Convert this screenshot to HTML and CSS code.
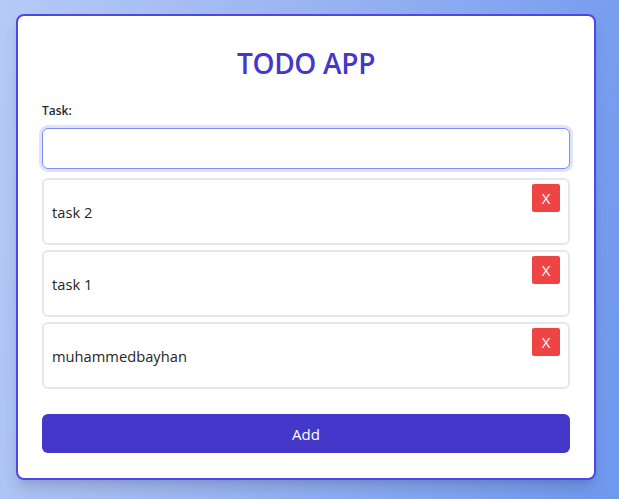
FILE: index.html
```html
<!DOCTYPE html>
<html>
<head>
<meta charset="utf-8">
<link rel="stylesheet" href="styles.css">
</head>
<body>
<div class="card">
  <h1 class="title">TODO APP</h1>
  <label class="label" for="task">Task:</label>
  <input class="input" id="task" type="text">
  <ul class="list">
    <li class="item"><span class="item-text">task 2</span><button class="del">X</button></li>
    <li class="item"><span class="item-text">task 1</span><button class="del">X</button></li>
    <li class="item"><span class="item-text">muhammedbayhan</span><button class="del">X</button></li>
  </ul>
  <button class="add">Add</button>
</div>
</body>
</html>
```
FILE: styles.css
```css
html, body {
  margin: 0;
  padding: 0;
  height: 100%;
}
body {
  background: linear-gradient(100deg, #b5caf6 0%, #9db6f2 40%, #6e97ee 100%);
  font-family: "Open Sans", "Noto Sans", sans-serif;
  padding: 14px 0 0 16px;
  box-sizing: border-box;
}
.card {
  width: 580px;
  height: 466px;
  box-sizing: border-box;
  background: #fff;
  border: 2px solid #4f46e5;
  border-radius: 8px;
  box-shadow: 0 10px 15px -3px rgba(0,0,0,0.15), 0 4px 6px -4px rgba(0,0,0,0.1);
  padding: 24px 24px 24px 24px;
  display: flex;
  flex-direction: column;
}
.title {
  margin: 3px 0 0;
  text-align: center;
  font-size: 28px;
  font-weight: 600;
  color: #4338ca;
  line-height: 40px;
  letter-spacing: -0.3px;
}
.label {
  margin-top: 20px;
  font-size: 12px;
  font-weight: 600;
  color: #1f2937;
  line-height: 16px;
}
.input {
  margin-top: 9px;
  height: 41px;
  box-sizing: border-box;
  border: 1px solid #818cf8;
  border-radius: 6px;
  box-shadow: 0 0 0 3px #dfe3fc;
  outline: none;
  width: 100%;
}
.list {
  list-style: none;
  margin: 9px 0 0;
  padding: 0;
  display: flex;
  flex-direction: column;
  gap: 5px;
}
.item {
  position: relative;
  height: 67px;
  box-sizing: border-box;
  border: 2px solid #e5e7eb;
  border-radius: 6px;
  display: flex;
  align-items: center;
  padding: 0 8px;
}
.item-text {
  font-size: 14.7px;
  color: #262626;
  margin-top: 1px;
}
.del {
  position: absolute;
  top: 4px;
  right: 8px;
  width: 28px;
  height: 28px;
  border: none;
  border-radius: 2px;
  background: #ef4444;
  color: #fff;
  font-family: "Open Sans", sans-serif;
  font-size: 15px;
  padding: 0;
}
.add {
  margin-top: 25px;
  height: 39px;
  border: none;
  border-radius: 6px;
  background: #4338ca;
  color: #fff;
  font-family: "Open Sans", sans-serif;
  font-size: 15px;
  width: 100%;
}
```
